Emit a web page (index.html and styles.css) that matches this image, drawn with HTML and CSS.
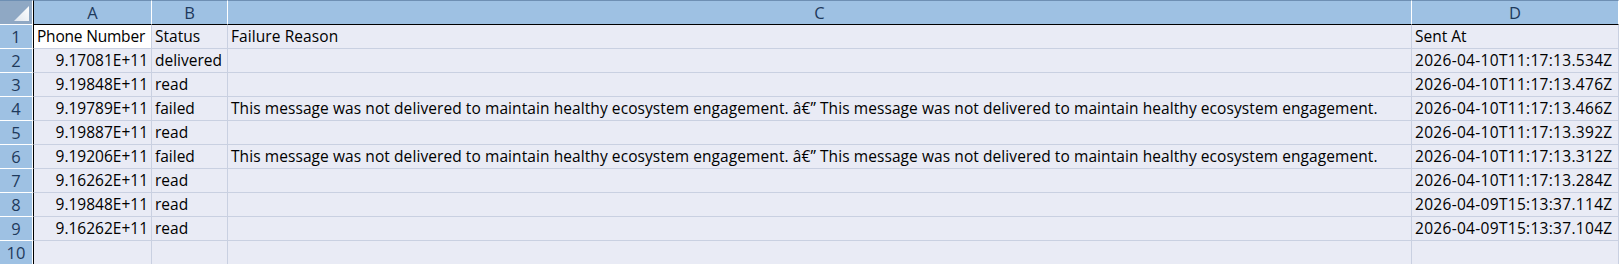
FILE: index.html
```html
<!DOCTYPE html>
<html>
<head>
<meta charset="utf-8">
<link rel="stylesheet" href="styles.css">
</head>
<body>
<div class="sheet">
  <div class="corner"><svg width="15" height="15" viewBox="0 0 15 15"><defs><linearGradient id="g" x1="0" y1="1" x2="1" y2="0"><stop offset="0" stop-color="#dfe6ee"/><stop offset="1" stop-color="#ffffff"/></linearGradient></defs><polygon points="15,0 15,15 0,15" fill="url(#g)"/></svg></div>
  <div class="colhead first">A</div>
  <div class="colhead">B</div>
  <div class="colhead">C</div>
  <div class="colhead">D</div>

  <div class="rowhead">1</div>
  <div class="cell a active">Phone Number</div>
  <div class="cell">Status</div>
  <div class="cell reason">Failure Reason</div>
  <div class="cell">Sent At</div>

  <div class="rowhead">2</div>
  <div class="cell a num">9.17081E+11</div>
  <div class="cell">delivered</div>
  <div class="cell reason"></div>
  <div class="cell date">2026-04-10T11:17:13.534Z</div>

  <div class="rowhead">3</div>
  <div class="cell a num">9.19848E+11</div>
  <div class="cell">read</div>
  <div class="cell reason"></div>
  <div class="cell date">2026-04-10T11:17:13.476Z</div>

  <div class="rowhead">4</div>
  <div class="cell a num">9.19789E+11</div>
  <div class="cell">failed</div>
  <div class="cell reason">This message was not delivered to maintain healthy ecosystem engagement. â€” This message was not delivered to maintain healthy ecosystem engagement.</div>
  <div class="cell date">2026-04-10T11:17:13.466Z</div>

  <div class="rowhead">5</div>
  <div class="cell a num">9.19887E+11</div>
  <div class="cell">read</div>
  <div class="cell reason"></div>
  <div class="cell date">2026-04-10T11:17:13.392Z</div>

  <div class="rowhead">6</div>
  <div class="cell a num">9.19206E+11</div>
  <div class="cell">failed</div>
  <div class="cell reason">This message was not delivered to maintain healthy ecosystem engagement. â€” This message was not delivered to maintain healthy ecosystem engagement.</div>
  <div class="cell date">2026-04-10T11:17:13.312Z</div>

  <div class="rowhead">7</div>
  <div class="cell a num">9.16262E+11</div>
  <div class="cell">read</div>
  <div class="cell reason"></div>
  <div class="cell date">2026-04-10T11:17:13.284Z</div>

  <div class="rowhead">8</div>
  <div class="cell a num">9.19848E+11</div>
  <div class="cell">read</div>
  <div class="cell reason"></div>
  <div class="cell date">2026-04-09T15:13:37.114Z</div>

  <div class="rowhead">9</div>
  <div class="cell a num">9.16262E+11</div>
  <div class="cell">read</div>
  <div class="cell reason"></div>
  <div class="cell date">2026-04-09T15:13:37.104Z</div>

  <div class="rowhead">10</div>
  <div class="cell a num"></div>
  <div class="cell"></div>
  <div class="cell reason"></div>
  <div class="cell"></div>
</div>
</body>
</html>
```

FILE: styles.css
```css
html, body {
  margin: 0;
  padding: 0;
  overflow: hidden;
  background: #e9ebf5;
}

.sheet {
  display: grid;
  grid-template-columns: 33px 119px 76px 1184px 207px;
  grid-template-rows: 25px repeat(10, 24px);
  width: 1619px;
  height: 264px;
  overflow: hidden;
  font-family: "Open Sans", "Noto Sans", sans-serif;
  font-size: 15.5px;
  color: #000;
}

.corner {
  box-sizing: border-box;
  background: #8fa8c4;
  border-top: 1px solid #6e8fb3;
  border-right: 1px solid #ffffff;
  border-bottom: 1px solid #ffffff;
  display: flex;
  align-items: flex-end;
  justify-content: flex-end;
  padding: 0 3px 3px 0;
}

.corner svg {
  display: block;
}

.colhead {
  box-sizing: border-box;
  background: #9ec1e3;
  border-top: 1px solid #6e8fb3;
  border-right: 1px solid #ffffff;
  border-bottom: 1px solid #000000;
  color: #1e3a5c;
  font-size: 16.5px;
  display: flex;
  align-items: center;
  justify-content: center;
  line-height: 23px;
}

.colhead.first {
  border-left: 1px solid #000000;
}

.rowhead {
  box-sizing: border-box;
  background: #9ec1e3;
  border-right: 1px solid #ffffff;
  border-bottom: 1px solid #ffffff;
  color: #1e3a5c;
  font-size: 16.5px;
  text-align: center;
  line-height: 23px;
}

.cell {
  box-sizing: border-box;
  background: #e9ebf5;
  border-right: 1px solid #c9d0e1;
  border-bottom: 1px solid #c9d0e1;
  line-height: 23px;
  padding: 0 3px;
  white-space: nowrap;
  overflow: hidden;
}

.cell.a {
  border-left: 1px solid #000000;
}

.cell.num {
  text-align: right;
}

.cell.active {
  background: #ffffff;
  letter-spacing: -0.2px;
}

.cell.reason {
  letter-spacing: 0.08px;
}

.cell.date {
  letter-spacing: 0.3px;
}
```
